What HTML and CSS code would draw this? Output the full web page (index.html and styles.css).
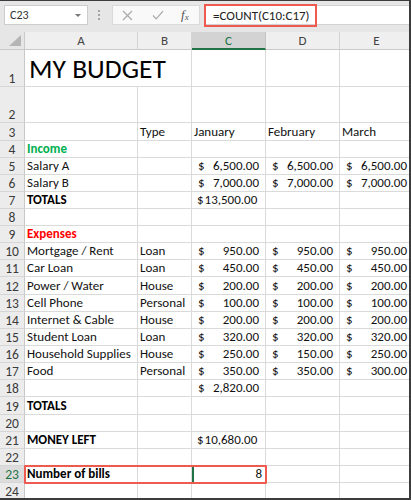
FILE: index.html
```html
<!DOCTYPE html>
<html lang="en">
<head>
<meta charset="utf-8">
<title>MY BUDGET</title>
<link rel="stylesheet" href="styles.css">
</head>
<body>
<div class="app">
  <div class="toolbar">
    <div class="namebox"><span>C23</span><span class="caret"></span></div>
    <div class="grip"><i></i><i></i><i></i></div>
    <div class="fbtns">
      <svg class="ico" width="11" height="11" viewBox="0 0 11 11"><path d="M1 1L10 10M10 1L1 10" stroke="#a9a9a9" stroke-width="1.2" fill="none"/></svg>
      <svg class="ico" width="12" height="10" viewBox="0 0 12 10"><path d="M1 5.5L4.2 8.8L11 1.2" stroke="#a9a9a9" stroke-width="1.2" fill="none"/></svg>
      <span class="fx">f<sub>x</sub></span>
    </div>
    <div class="formula"><span class="ftext">=COUNT(C10:C17)</span></div>
  </div>

  <div class="sheet">
    <div class="corner"><span class="tri"></span></div>
    <div class="ch">A</div><div class="ch">B</div><div class="ch sel">C</div><div class="ch">D</div><div class="ch">E</div>

    <div class="rh">1</div><div class="c title">MY BUDGET</div><div class="c"></div><div class="c"></div><div class="c"></div>
    <div class="rh">2</div><div class="c"></div><div class="c"></div><div class="c"></div><div class="c"></div><div class="c"></div>
    <div class="rh">3</div><div class="c"></div><div class="c">Type</div><div class="c">January</div><div class="c">February</div><div class="c">March</div>
    <div class="rh">4</div><div class="c income">Income</div><div class="c"></div><div class="c"></div><div class="c"></div><div class="c"></div>
    <div class="rh">5</div><div class="c">Salary A</div><div class="c"></div><div class="c acc"><span>$</span><span>6,500.00</span></div><div class="c acc"><span>$</span><span>6,500.00</span></div><div class="c acc"><span>$</span><span>6,500.00</span></div>
    <div class="rh">6</div><div class="c">Salary B</div><div class="c"></div><div class="c acc"><span>$</span><span>7,000.00</span></div><div class="c acc"><span>$</span><span>7,000.00</span></div><div class="c acc"><span>$</span><span>7,000.00</span></div>
    <div class="rh">7</div><div class="c b">TOTALS</div><div class="c"></div><div class="c acc tight"><span>$</span><span>13,500.00</span></div><div class="c"></div><div class="c"></div>
    <div class="rh">8</div><div class="c"></div><div class="c"></div><div class="c"></div><div class="c"></div><div class="c"></div>
    <div class="rh">9</div><div class="c expenses">Expenses</div><div class="c"></div><div class="c"></div><div class="c"></div><div class="c"></div>
    <div class="rh">10</div><div class="c">Mortgage / Rent</div><div class="c">Loan</div><div class="c acc"><span>$</span><span>950.00</span></div><div class="c acc"><span>$</span><span>950.00</span></div><div class="c acc"><span>$</span><span>950.00</span></div>
    <div class="rh">11</div><div class="c">Car Loan</div><div class="c">Loan</div><div class="c acc"><span>$</span><span>450.00</span></div><div class="c acc"><span>$</span><span>450.00</span></div><div class="c acc"><span>$</span><span>450.00</span></div>
    <div class="rh">12</div><div class="c">Power / Water</div><div class="c">House</div><div class="c acc"><span>$</span><span>200.00</span></div><div class="c acc"><span>$</span><span>200.00</span></div><div class="c acc"><span>$</span><span>200.00</span></div>
    <div class="rh">13</div><div class="c">Cell Phone</div><div class="c">Personal</div><div class="c acc"><span>$</span><span>100.00</span></div><div class="c acc"><span>$</span><span>100.00</span></div><div class="c acc"><span>$</span><span>100.00</span></div>
    <div class="rh">14</div><div class="c">Internet &amp; Cable</div><div class="c">House</div><div class="c acc"><span>$</span><span>200.00</span></div><div class="c acc"><span>$</span><span>200.00</span></div><div class="c acc"><span>$</span><span>200.00</span></div>
    <div class="rh">15</div><div class="c">Student Loan</div><div class="c">Loan</div><div class="c acc"><span>$</span><span>320.00</span></div><div class="c acc"><span>$</span><span>320.00</span></div><div class="c acc"><span>$</span><span>320.00</span></div>
    <div class="rh">16</div><div class="c">Household Supplies</div><div class="c">House</div><div class="c acc"><span>$</span><span>250.00</span></div><div class="c acc"><span>$</span><span>150.00</span></div><div class="c acc"><span>$</span><span>250.00</span></div>
    <div class="rh">17</div><div class="c">Food</div><div class="c">Personal</div><div class="c acc"><span>$</span><span>350.00</span></div><div class="c acc"><span>$</span><span>350.00</span></div><div class="c acc"><span>$</span><span>300.00</span></div>
    <div class="rh">18</div><div class="c"></div><div class="c"></div><div class="c acc"><span>$</span><span>2,820.00</span></div><div class="c"></div><div class="c"></div>
    <div class="rh">19</div><div class="c b">TOTALS</div><div class="c"></div><div class="c"></div><div class="c"></div><div class="c"></div>
    <div class="rh">20</div><div class="c"></div><div class="c"></div><div class="c"></div><div class="c"></div><div class="c"></div>
    <div class="rh">21</div><div class="c b">MONEY LEFT</div><div class="c"></div><div class="c acc tight"><span>$</span><span>10,680.00</span></div><div class="c"></div><div class="c"></div>
    <div class="rh">22</div><div class="c"></div><div class="c"></div><div class="c"></div><div class="c"></div><div class="c"></div>
    <div class="rh selrow">23</div><div class="c b">Number of bills</div><div class="c"></div><div class="c num active">8</div><div class="c"></div><div class="c"></div>
    <div class="rh">24</div><div class="c"></div><div class="c"></div><div class="c"></div><div class="c"></div><div class="c"></div>
  </div>

  <div class="callout"></div>
</div>
</body>
</html>
```

FILE: styles.css
```css
* {
  box-sizing: border-box;
  margin: 0;
  padding: 0;
}

body {
  margin: 0;
  background: #ffffff;
  font-family: Carlito, Calibri, Lato, "Liberation Sans", sans-serif;
  color: #111;
}

.app {
  position: relative;
  width: 411px;
  height: 500px;
  overflow: hidden;
  background: #ffffff;
  border-top: 1px solid #3c3c3c;
  border-right: 2px solid #3c3c3c;
  border-bottom: 2px solid #3c3c3c;
}

/* ---------- formula toolbar ---------- */
.toolbar {
  height: 31px;
  display: flex;
  align-items: flex-start;
  padding: 4px 0 0 4px;
  background: #e6e6e6;
}

.namebox {
  width: 84px;
  height: 20px;
  background: #ffffff;
  border: 1px solid #cdcdcd;
  display: flex;
  align-items: center;
  justify-content: space-between;
  padding: 0 6px 0 5px;
  font-size: 12px;
  color: #333;
}

.caret {
  width: 0;
  height: 0;
  border-left: 3px solid transparent;
  border-right: 3px solid transparent;
  border-top: 3px solid #777;
}

.grip {
  margin-left: 10px;
  width: 3px;
  height: 20px;
  display: flex;
  flex-direction: column;
  justify-content: center;
  gap: 2px;
}

.grip i {
  display: block;
  width: 2px;
  height: 2px;
  background: #a5a5a5;
}

.fbtns {
  margin-left: 11px;
  width: 88px;
  height: 20px;
  background: #f9f9f9;
  border: 1px solid #dadada;
  display: flex;
  align-items: center;
  padding-left: 9px;
}

.fbtns .ico + .ico {
  margin-left: 19px;
}

.fx {
  margin-left: 17px;
  font-family: "Liberation Serif", serif;
  font-style: italic;
  font-size: 13px;
  color: #555;
  line-height: 1;
}

.fx sub {
  font-size: 9px;
  vertical-align: -1px;
}

.formula {
  margin-left: 4px;
  flex: 1;
  height: 20px;
  background: #ffffff;
  border: 1px solid #d2d2d2;
  border-right: none;
  display: flex;
  align-items: center;
}

.ftext {
  margin-left: -1px;
  width: 113px;
  height: 23px;
  border: 2px solid #ee5a50;
  display: flex;
  align-items: center;
  padding-left: 7px;
  font-size: 13px;
  color: #222;
}

/* ---------- grid ---------- */
.sheet {
  display: grid;
  grid-template-columns: 25px 113px 54px 74px 74px 74px;
  grid-template-rows: 18px 37px 36px 18px repeat(8, 17px) 18px repeat(6, 17px) 18px repeat(5, 17px);
  font-size: 13px;
}

.corner {
  position: relative;
  background: #e6e6e6;
  border-right: 1px solid #c9c9c9;
  border-bottom: 1px solid #c9c9c9;
}

.tri {
  position: absolute;
  right: 3px;
  bottom: 3px;
  width: 0;
  height: 0;
  border-left: 12px solid transparent;
  border-bottom: 11px solid #b5b5b5;
}

.ch {
  background: #efefef;
  border-right: 1px solid #d4d4d4;
  border-bottom: 1px solid #c9c9c9;
  display: flex;
  align-items: center;
  justify-content: center;
  font-size: 13px;
  color: #444;
}

.ch.sel {
  background: #d3d3d3;
  color: #217346;
  border-bottom: 2px solid #217346;
  border-right-color: #c4c4c4;
}

.rh {
  background: #ececec;
  border-right: 1px solid #c9c9c9;
  border-bottom: 1px solid #d6d6d6;
  display: flex;
  align-items: flex-end;
  justify-content: center;
  font-size: 13.5px;
  line-height: 15px;
  color: #3a3a3a;
}

.rh.selrow {
  background: #dcdcdc;
  color: #217346;
}

.c {
  border-right: 1px solid #dadada;
  border-bottom: 1px solid #dadada;
  display: flex;
  align-items: flex-end;
  padding: 0 2px 1px 2px;
  line-height: 14px;
  white-space: nowrap;
  color: #111;
}

.title {
  grid-column: span 2;
  font-size: 27.5px;
  line-height: 30px;
  padding: 0 4px 2px 4px;
  color: #000;
}

.b {
  font-weight: 700;
  color: #000;
}

.income {
  font-weight: 700;
  color: #00b050;
}

.expenses {
  font-weight: 700;
  color: #ff0000;
}

.acc {
  justify-content: space-between;
  padding: 0 6px 1px 6px;
}

.acc.tight {
  justify-content: flex-start;
  gap: 1px;
  padding-left: 5px;
}

.num {
  justify-content: flex-end;
  padding-right: 3px;
}

.active {
  box-shadow: inset 2px 0 0 #217346;
}

/* annotation highlight over row 23 */
.callout {
  position: absolute;
  left: 24px;
  top: 464px;
  width: 243px;
  height: 19px;
  border: 2px solid #ee5a50;
  border-radius: 1px;
}
```
